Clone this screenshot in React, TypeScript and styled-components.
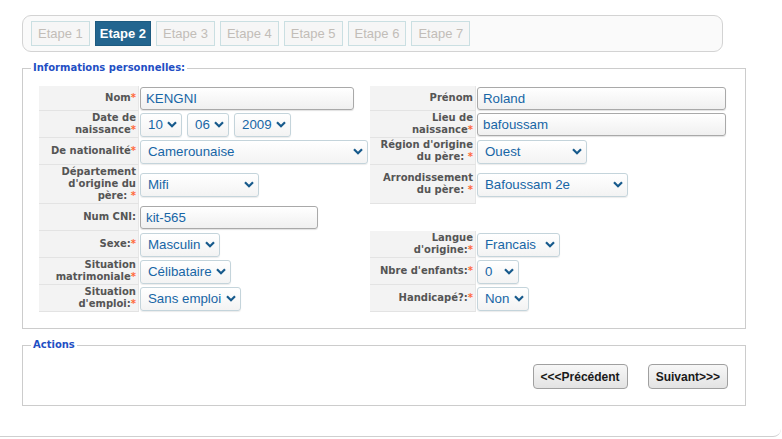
import React from "react";
import styled, { createGlobalStyle } from "styled-components";

const GlobalStyle = createGlobalStyle`
  html, body { margin: 0; padding: 0; background: #fff; }
  body { font-family: "Liberation Sans", Arial, sans-serif; }
  * { box-sizing: border-box; }
`;

const Page = styled.div`
  width: 781px;
  height: 437px;
  padding: 15px 0 0 22px;
  border-bottom: 1px solid #cfcfcf;
  border-bottom-right-radius: 8px;
`;

const StepsBar = styled.div`
  width: 701px;
  height: 37px;
  display: flex;
  align-items: flex-start;
  gap: 5px;
  padding: 5px 8px;
  background: #fafafa;
  border: 1px solid #d3d3d3;
  border-radius: 9px;
`;

const Step = styled.div<{ $active?: boolean }>`
  height: 25px;
  display: flex;
  align-items: center;
  padding: 0 ${(p) => (p.$active ? 4 : 6)}px;
  font-family: "Liberation Sans", Arial, sans-serif;
  font-size: 13px;
  font-weight: ${(p) => (p.$active ? 700 : 400)};
  color: ${(p) => (p.$active ? "#ffffff" : "#c2bdb8")};
  background: ${(p) => (p.$active ? "#23658f" : "#f6f6f6")};
  border: 1px solid ${(p) => (p.$active ? "#1d5a80" : "#cadfe2")};
`;

const Fieldset = styled.fieldset<{ $top: number }>`
  width: 724px;
  margin: ${(p) => p.$top}px 0 0 0;
  padding: 0 16px 16px 16px;
  border: 1px solid #cccccc;
  min-inline-size: 0;
`;

const Legend = styled.legend`
  margin-left: -8px;
  padding: 0 2px;
  font-family: "DejaVu Sans", Verdana, sans-serif;
  font-size: 10px;
  font-weight: 700;
  line-height: 12px;
  color: #1f4fc4;
`;

const Table = styled.div`
  margin-top: 12px;
  width: 689px;
  display: flex;
  flex-direction: column;
`;

const Row = styled.div<{ $h: number }>`
  display: grid;
  grid-template-columns: 100px 231px 106px 252px;
  min-height: ${(p) => p.$h}px;
`;

const Label = styled.div`
  display: flex;
  align-items: center;
  justify-content: flex-end;
  text-align: right;
  padding: 0 2px 0 4px;
  background: #f3f3f3;
  border-bottom: 1px solid #e3e3e3;
  border-right: 1px solid #e6e6e6;
  font-family: "DejaVu Sans", Verdana, sans-serif;
  font-size: 10px;
  font-weight: 700;
  line-height: 12px;
  color: #555555;
`;

const Req = styled.span`
  color: #ff6a3a;
`;

const Field = styled.div`
  display: flex;
  align-items: center;
  gap: 5px;
  padding: 0 1px;
`;

const TextInput = styled.div<{ $w: number }>`
  width: ${(p) => p.$w}px;
  height: 23px;
  display: flex;
  align-items: center;
  padding: 0 5px;
  font-family: "Liberation Sans", Arial, sans-serif;
  font-size: 13.3px;
  color: #1766a6;
  background: linear-gradient(#ffffff, #f0f0f0);
  border: 1px solid #a9a9a9;
  border-radius: 3px;
  box-shadow: 0 1px 1px rgba(0, 0, 0, 0.12);
`;

const SelectBox = styled.div<{ $w: number }>`
  width: ${(p) => p.$w}px;
  height: 24px;
  display: flex;
  align-items: center;
  justify-content: space-between;
  padding: 0 4px 0 7px;
  font-family: "Liberation Sans", Arial, sans-serif;
  font-size: 13.3px;
  color: #1766a6;
  background: linear-gradient(#ffffff, #f3f3f3);
  border: 1px solid #c4d4db;
  border-radius: 3px;
  box-shadow: 0 1px 1px rgba(0, 0, 0, 0.08);
`;

const Chevron = () => (
  <svg width="10" height="7" viewBox="0 0 10 7">
    <polyline points="1,1.2 5,5.2 9,1.2" fill="none" stroke="#175a8c" strokeWidth="2.2" />
  </svg>
);

const Select = ({ value, w }: { value: string; w: number }) => (
  <SelectBox $w={w}>
    <span>{value}</span>
    <Chevron />
  </SelectBox>
);

const Blank = styled.div``;

const Actions = styled.div`
  margin-top: 13px;
  display: flex;
  justify-content: flex-end;
  gap: 20px;
  padding-right: 1px;
`;

const Button = styled.button`
  height: 25px;
  padding: 0 7px;
  font-family: "Liberation Sans", Arial, sans-serif;
  font-size: 12px;
  font-weight: 700;
  color: #1a1a1a;
  background: linear-gradient(#f7f7f7, #e3e3e3);
  border: 1px solid #a0a0a0;
  border-radius: 4px;
`;

const L = ({ children, req, sp }: { children: React.ReactNode; req?: boolean; sp?: boolean }) => (
  <Label>
    <span>
      {children}
      {req && <Req>{sp ? " *" : "*"}</Req>}
    </span>
  </Label>
);

export default function App() {
  const steps = ["Etape 1", "Etape 2", "Etape 3", "Etape 4", "Etape 5", "Etape 6", "Etape 7"];
  return (
    <>
      <GlobalStyle />
      <Page>
        <StepsBar>
          {steps.map((s, i) => (
            <Step key={s} $active={i === 1}>
              {s}
            </Step>
          ))}
        </StepsBar>

        <Fieldset $top={10}>
          <Legend>Informations personnelles:</Legend>
          <Table>
            <Row $h={25}>
              <L req>Nom</L>
              <Field>
                <TextInput $w={214}>KENGNI</TextInput>
              </Field>
              <L>Prénom</L>
              <Field>
                <TextInput $w={249}>Roland</TextInput>
              </Field>
            </Row>
            <Row $h={27}>
              <L req>Date de naissance</L>
              <Field>
                <Select value="10" w={42} />
                <Select value="06" w={42} />
                <Select value="2009" w={57} />
              </Field>
              <L req>Lieu de naissance</L>
              <Field>
                <TextInput $w={249}>bafoussam</TextInput>
              </Field>
            </Row>
            <Row $h={27}>
              <L req>De nationalité</L>
              <Field>
                <Select value="Camerounaise" w={228} />
              </Field>
              <L req sp>
                Région d'origine du père:
              </L>
              <Field>
                <Select value="Ouest" w={110} />
              </Field>
            </Row>
            <Row $h={39}>
              <L req sp>
                Département d'origine du père:
              </L>
              <Field>
                <Select value="Mifi" w={119} />
              </Field>
              <L req sp>
                Arrondissement du père:
              </L>
              <Field>
                <Select value="Bafoussam 2e" w={151} />
              </Field>
            </Row>
            <Row $h={27}>
              <L>Num CNI:</L>
              <Field>
                <TextInput $w={178}>kit-565</TextInput>
              </Field>
              <Blank />
              <Blank />
            </Row>
            <Row $h={27}>
              <L req>Sexe:</L>
              <Field>
                <Select value="Masculin" w={80} />
              </Field>
              <L req>Langue d'origine:</L>
              <Field>
                <Select value="Francais" w={83} />
              </Field>
            </Row>
            <Row $h={27}>
              <L req>Situation matrimoniale</L>
              <Field>
                <Select value="Célibataire" w={91} />
              </Field>
              <L req>Nbre d'enfants:</L>
              <Field>
                <Select value="0" w={42} />
              </Field>
            </Row>
            <Row $h={27}>
              <L req>Situation d'emploi:</L>
              <Field>
                <Select value="Sans emploi" w={101} />
              </Field>
              <L req>Handicapé?:</L>
              <Field>
                <Select value="Non" w={52} />
              </Field>
            </Row>
          </Table>
        </Fieldset>

        <Fieldset $top={10}>
          <Legend>Actions</Legend>
          <Actions>
            <Button>&lt;&lt;&lt;Précédent</Button>
            <Button>Suivant&gt;&gt;&gt;</Button>
          </Actions>
        </Fieldset>
      </Page>
    </>
  );
}
